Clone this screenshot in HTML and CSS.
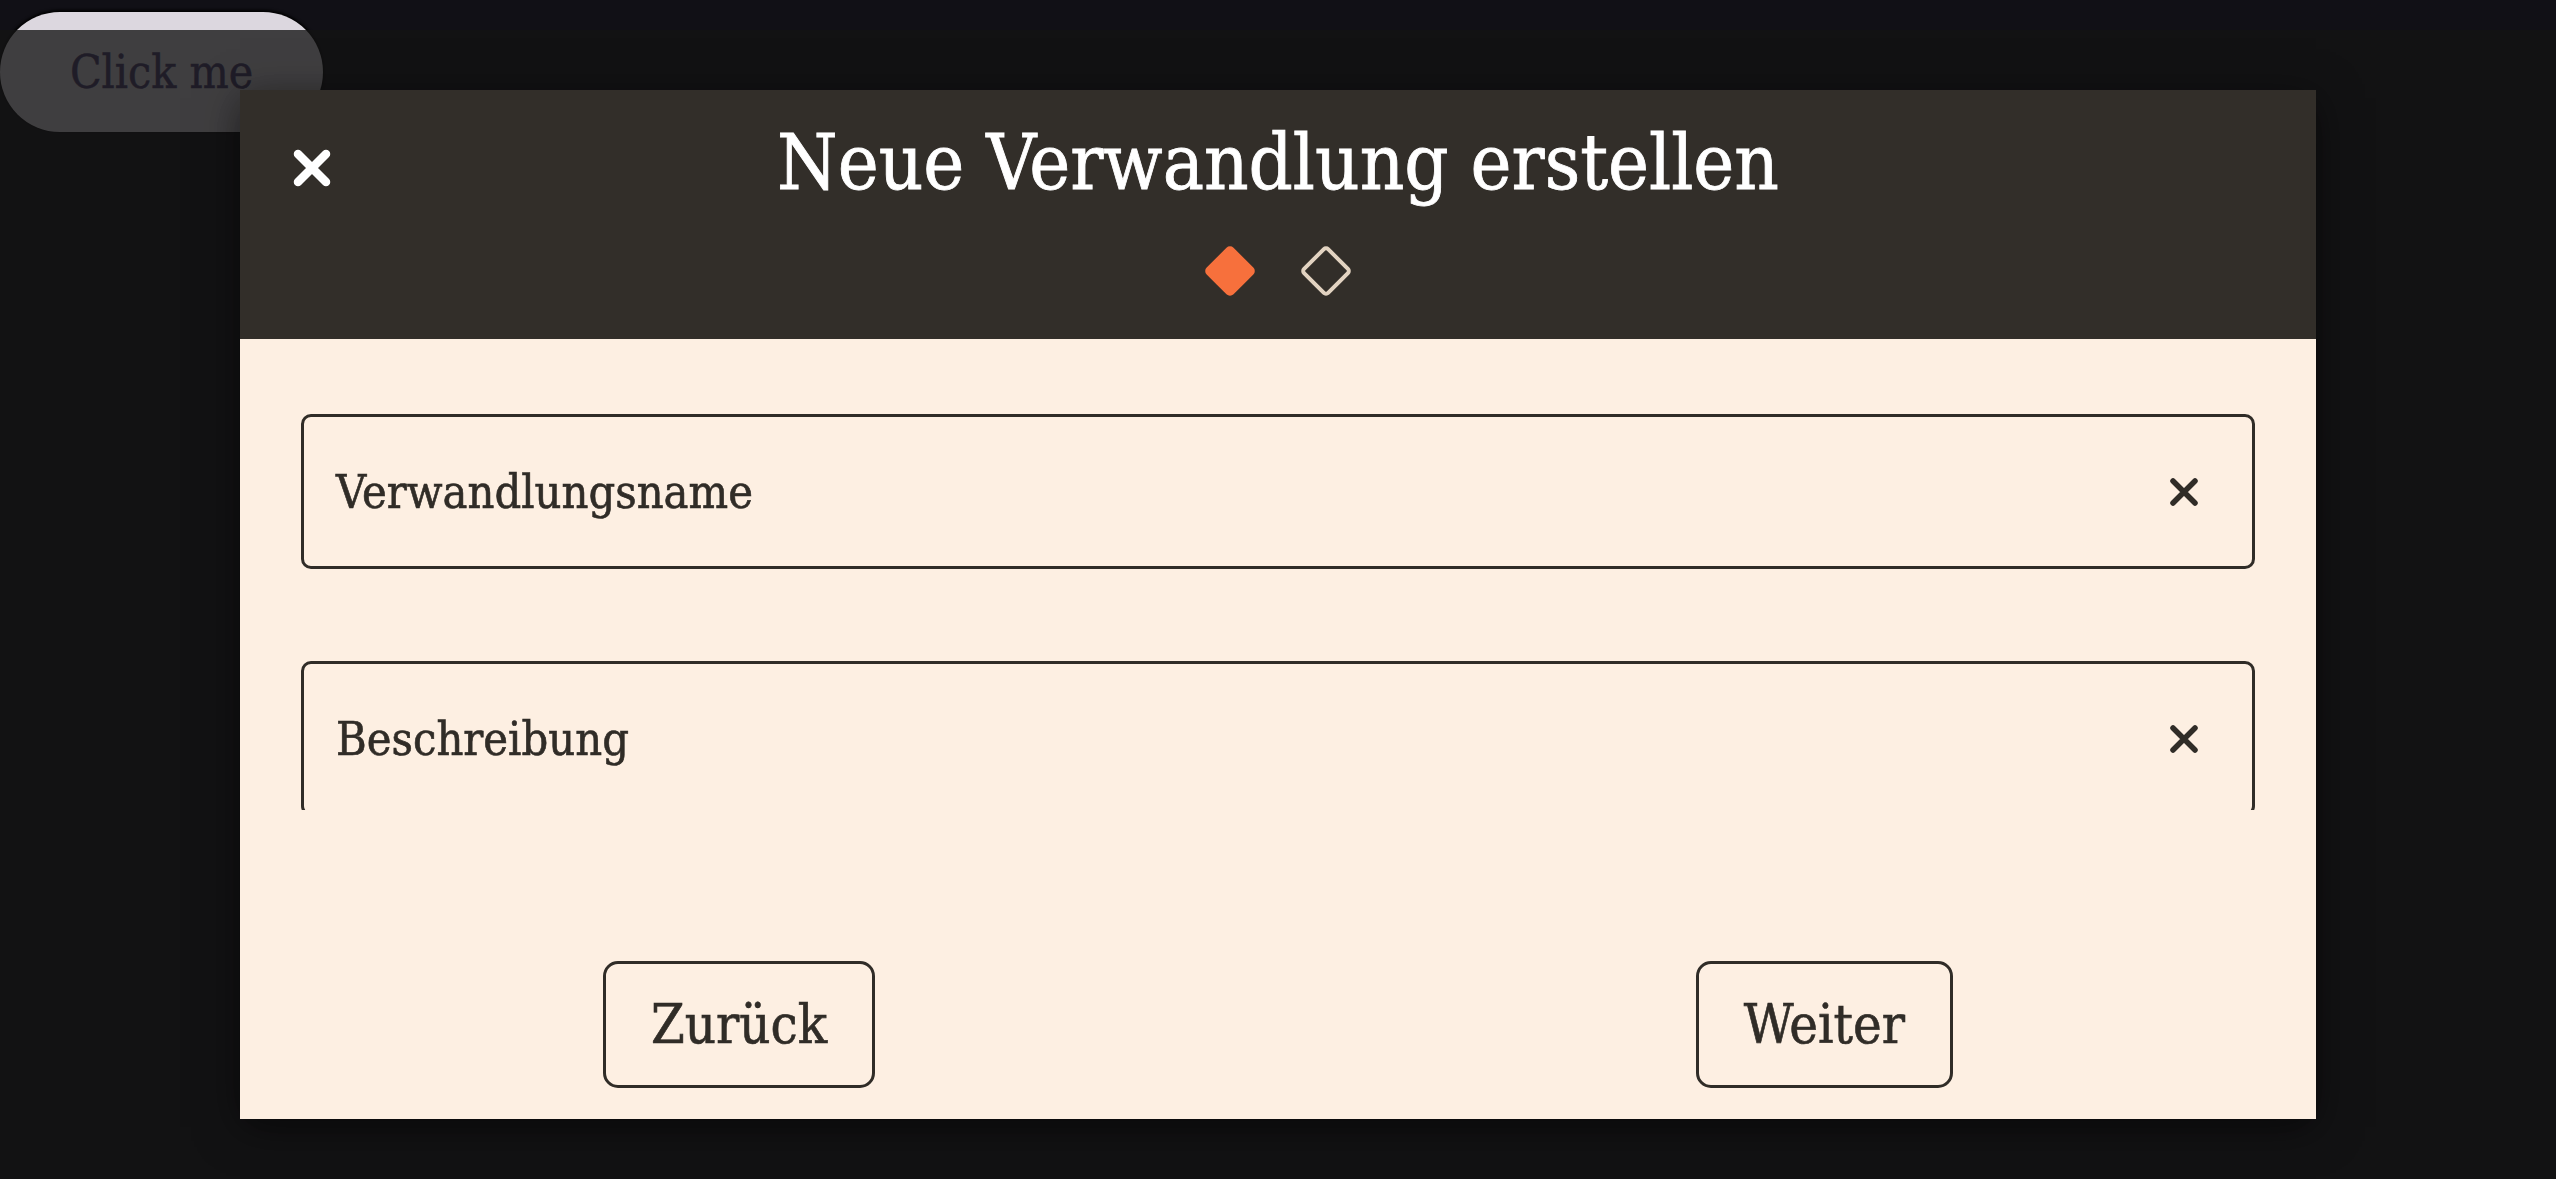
FILE: index.html
```html
<!DOCTYPE html>
<html lang="de">
<head>
<meta charset="utf-8">
<title>Neue Verwandlung erstellen</title>
<link rel="stylesheet" href="styles.css">
</head>
<body>
<button class="click-btn">Click me</button>

<div class="overlay">
  <div class="modal">
    <header class="modal-header">
      <button class="close-btn" aria-label="Schließen">
        <svg viewBox="0 0 38 38" width="38" height="38"><path d="M5 5 L33 33 M33 5 L5 33" stroke="#fff" stroke-width="8.5" stroke-linecap="round" fill="none"/></svg>
      </button>
      <h1 class="modal-title">Neue Verwandlung erstellen</h1>
      <span class="spacer"></span>
      <div class="steps">
        <span class="step step-active"></span>
        <span class="step"></span>
      </div>
    </header>

    <div class="modal-body">
      <div class="field">
        <span class="field-label">Verwandlungsname</span>
        <svg class="clear" viewBox="0 0 30 30" width="30" height="30"><path d="M4 4 L26 26 M26 4 L4 26" stroke="#302c27" stroke-width="5.5" stroke-linecap="round" fill="none"/></svg>
      </div>
      <div class="field">
        <span class="field-label">Beschreibung</span>
        <svg class="clear" viewBox="0 0 30 30" width="30" height="30"><path d="M4 4 L26 26 M26 4 L4 26" stroke="#302c27" stroke-width="5.5" stroke-linecap="round" fill="none"/></svg>
      </div>
    </div>

    <footer class="modal-footer">
      <button class="nav-btn">Zurück</button>
      <button class="nav-btn">Weiter</button>
    </footer>
  </div>
</div>
</body>
</html>
```

FILE: styles.css
```css
html, body {
  margin: 0;
  padding: 0;
}

body {
  background: #111016;
  width: 2556px;
  height: 1179px;
  overflow: hidden;
  font-family: "DejaVu Serif Condensed", "DejaVu Serif", serif;
  font-stretch: condensed;
}

.click-btn {
  display: block;
  margin-top: 12px;
  width: 323px;
  height: 120px;
  border: none;
  border-radius: 60px;
  background: #dcd7df;
  color: #4a3d6e;
  font-family: inherit;
  font-stretch: condensed;
  font-size: 46px;
  -webkit-text-stroke: 0.5px currentColor;
  box-shadow: 0 -1px 3px 1px #000;
  padding: 0;
}

.overlay {
  position: fixed;
  top: 30px;
  left: 0;
  right: 0;
  bottom: 0;
  background: rgba(19, 19, 19, 0.78);
}

.modal {
  width: 2076px;
  margin: 60px auto 0;
  height: 1029px;
  display: flex;
  flex-direction: column;
  background: #fdefe2;
  box-shadow: 0 8px 40px rgba(0, 0, 0, 0.55);
}

.modal-header {
  background: #322e29;
  display: grid;
  grid-template-columns: 1fr auto 1fr;
  padding: 34px 0 49px;
}

.close-btn {
  justify-self: start;
  align-self: start;
  margin: 25px 0 0 53px;
  width: 38px;
  height: 38px;
  padding: 0;
  border: none;
  background: none;
  display: flex;
}

.modal-title {
  margin: 0;
  font-size: 77px;
  line-height: 77px;
  font-weight: normal;
  color: #ffffff;
  white-space: nowrap;
  -webkit-text-stroke: 0.8px currentColor;
}

.steps {
  grid-column: 1 / -1;
  display: flex;
  justify-content: center;
  gap: 58px;
  margin-top: 51px;
}

.step {
  width: 38px;
  height: 38px;
  box-sizing: border-box;
  border: 4.5px solid #e2d3c1;
  border-radius: 5px;
  transform: rotate(45deg);
}

.step-active {
  background: #f7703c;
  border-color: #f7703c;
}

.modal-body {
  height: 471px;
  overflow: hidden;
  box-sizing: border-box;
  padding: 75px 61px 0;
  display: flex;
  flex-direction: column;
  gap: 92px;
  flex-shrink: 0;
}

.field {
  flex-shrink: 0;
  height: 155px;
  box-sizing: border-box;
  border: 3px solid #302c27;
  border-radius: 10px;
  padding: 0 53px 0 32px;
  display: flex;
  align-items: center;
  justify-content: space-between;
}

.field-label {
  font-size: 46.5px;
  color: #302c27;
  -webkit-text-stroke: 0.6px currentColor;
}

.modal-footer {
  flex: 1;
  display: flex;
  align-items: flex-end;
  justify-content: space-between;
  padding: 0 363px 31px;
}

.nav-btn {
  height: 127px;
  box-sizing: border-box;
  border: 3px solid #302c27;
  border-radius: 15px;
  background: transparent;
  color: #302c27;
  font-family: inherit;
  font-stretch: condensed;
  font-size: 54px;
  -webkit-text-stroke: 0.6px currentColor;
  padding: 0 45px;
}
```
